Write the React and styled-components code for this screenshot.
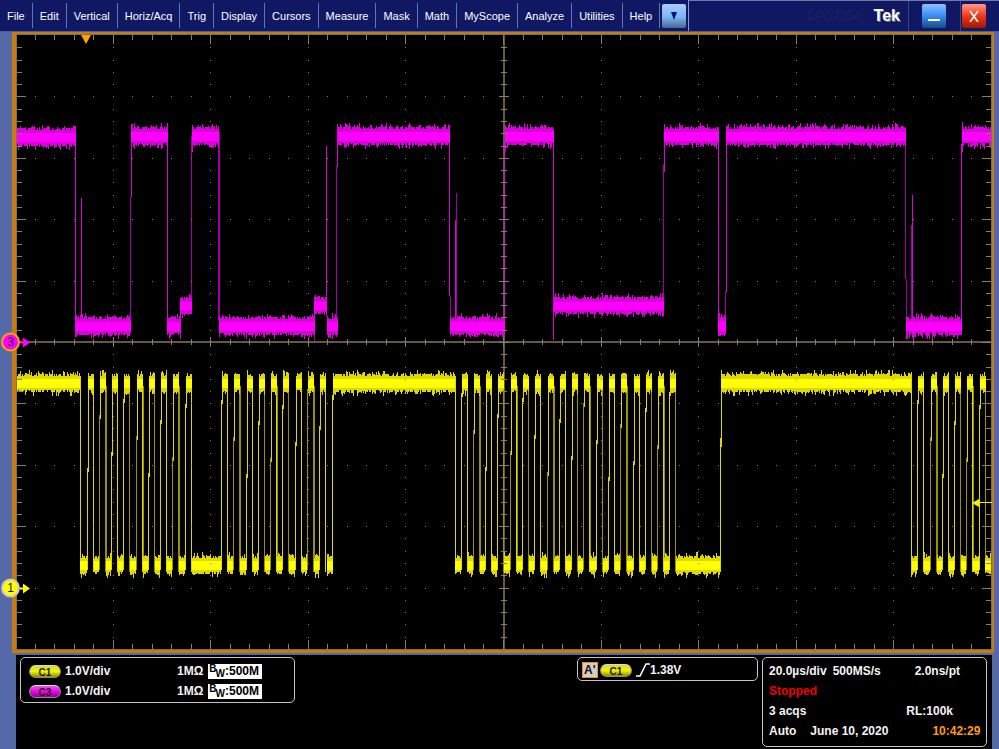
import React from 'react';
import styled, { createGlobalStyle } from 'styled-components';

const GlobalStyle = createGlobalStyle`
  * {
    box-sizing: border-box;
  }
  body {
    margin: 0;
    background-color: #5568a8;
    font-family: 'Liberation Sans', Arial, sans-serif;
  }
`;

const Page = styled.div`
  display: flex;
  flex-direction: column;
  height: 100vh;
  min-height: 480px;
`;

const MenuBar = styled.header`
  display: flex;
  flex: none;
  height: 32px;
  background-color: #101864;
  border-bottom: 1px solid #4a5ca4;
`;

const Menu = styled.nav`
  display: flex;
  align-items: center;
`;

const MenuItem = styled.button`
  height: 25px;
  padding: 0 7px;
  border: 0;
  border-right: 1px solid #5f78b4;
  background: none;
  color: #ffffff;
  font-family: inherit;
  font-size: 11px;
`;

const TitleArea = styled.div`
  display: flex;
  flex: 1;
  align-items: center;
  justify-content: flex-end;
  border-top: 1px solid #7079a8;
  border-left: 1px solid #8f98c0;
`;

const Model = styled.span`
  margin-right: 14px;
  color: #1b2159;
  font-size: 12px;
`;

const Brand = styled.span`
  margin-right: 8px;
  color: #ffffff;
  font-size: 16px;
  font-weight: 700;
  text-shadow: 1px 1px 0 #77756c;
`;

const WindowSlot = styled.div`
  display: flex;
  align-items: center;
  height: 100%;
  padding: 0 ${(p) => p.$right}px 0 ${(p) => p.$left}px;
  border-left: 1px solid #3d4684;
`;

const fills = {
  menu: 'linear-gradient(#a9cdfb, #7db4f4 55%, #46698f)',
  minimize: 'linear-gradient(#8fc0ff, #3a8bf5 50%, #184a88)',
  close: 'linear-gradient(#ff9a88, #f0371c 50%, #9e1800)',
};

const GlossButton = styled.button`
  display: flex;
  align-items: center;
  justify-content: center;
  width: 24px;
  height: 24px;
  margin: 0 ${(p) => (p.$kind === 'menu' ? 2 : 0)}px;
  padding: 0;
  border: 0;
  border-radius: 2px;
  background: ${(p) => fills[p.$kind]};
`;

const Screen = styled.main`
  position: relative;
  display: flex;
  flex: 1;
  min-height: 0;
  margin: 0 5px 2px 12px;
  border: solid #c27c10;
  border-width: 2px 2px 3px 4px;
  background-color: #000000;
`;

const Plot = styled.svg`
  display: block;
  flex: 1;
  min-width: 0;
  height: 100%;
`;

const Marker = styled.div`
  position: absolute;
  top: ${(p) => p.$top};
  left: -15px;
  display: flex;
  align-items: center;
  transform: translateY(-50%);
`;

const MarkerDot = styled.span`
  width: 19px;
  height: 19px;
  border: 2px solid ${(p) => p.$ring};
  border-radius: 50%;
  background-color: ${(p) => p.$color};
  color: #20102a;
  font-size: 12px;
  line-height: 15px;
  text-align: center;
`;

const StatusBar = styled.footer`
  display: flex;
  flex: none;
  align-items: flex-start;
  gap: 4px;
  height: 94px;
  margin: 0 7px 0 16px;
  padding: 2px 5px 2px 4px;
  background-color: #000000;
  color: #f4f4f4;
  font-size: 12px;
  font-weight: 700;
  line-height: 20px;
  white-space: pre;
`;

const Panel = styled.section`
  width: ${(p) => p.$width}px;
  height: ${(p) => p.$height};
  margin-left: ${(p) => (p.$push ? 'auto' : 0)};
  padding: ${(p) => p.$pad};
  border: 1px solid #c4c4c4;
  border-radius: 5px;
`;

const Row = styled.div`
  display: flex;
  align-items: center;
  height: 20px;
  justify-content: ${(p) => (p.$spread ? 'space-between' : 'flex-start')};
`;

const Badge = styled.span`
  width: 32px;
  height: 13px;
  margin-right: 4px;
  border: 1px solid #8d8d86;
  border-top-color: #d8d8d0;
  border-radius: 7px;
  background: linear-gradient(${(p) => p.$from}, ${(p) => p.$mid} 50%, ${(p) => p.$to});
  color: #241c10;
  font-size: 10px;
  line-height: 13px;
  text-align: center;
`;

const Scale = styled.span`
  width: 112px;
`;

const Bandwidth = styled.span`
  display: flex;
  width: 54px;
  height: 15px;
  margin-left: 5px;
  background-color: #ffffff;
  color: #000000;
  line-height: 14px;
`;

const Small = styled.span`
  margin-left: ${(p) => (p.$low ? -1 : 1)}px;
  padding-top: ${(p) => (p.$low ? 5 : 0)}px;
  font-size: 10px;
  line-height: 10px;
`;

const Source = styled.span`
  width: 16px;
  height: 16px;
  margin-right: 2px;
  padding-left: 1px;
  border: 1px solid #f08a10;
  background-color: #cfcfcf;
  color: #111111;
  line-height: 14px;
`;

const Field = styled.span`
  margin-right: ${(p) => p.$after || 0}px;
  color: ${(p) => p.$color || 'inherit'};
`;

const menus = [
  'File', 'Edit', 'Vertical', 'Horiz/Acq', 'Trig', 'Display', 'Cursors',
  'Measure', 'Mask', 'Math', 'MyScope', 'Analyze', 'Utilities', 'Help',
];

const LEFT = 16;
const RIGHT = 992;
const TOP = 35;
const BOTTOM = 649;
const MID_X = 504;
const MID_Y = 342;
const STEP_X = 19.52;
const STEP_Y = 12.28;

// Top and bottom of the solid part of each voltage level.
const levels = {
  c3High: [129, 143],
  c3Start: [130, 144],
  c3Mid: [299, 312],
  c3Low: [319, 333],
  c1High: [376, 390],
  c1Low: [558, 572],
};

// [start, end, level]
const c3Bands = [
  [16, 76, 'c3Start'], [76, 131, 'c3Low'], [131, 168, 'c3High'],
  [167, 180, 'c3Low'], [180, 192, 'c3Mid'], [192, 219, 'c3High'],
  [219, 315, 'c3Low'], [314, 327, 'c3Mid'], [327, 338, 'c3Low'],
  [338, 450, 'c3High'], [450, 505, 'c3Low'], [505, 554, 'c3High'],
  [554, 664, 'c3Mid'], [664, 719, 'c3High'], [718, 726, 'c3Low'],
  [726, 906, 'c3High'], [906, 962, 'c3Low'], [962, 992, 'c3High'],
];

// [x, top, bottom, bright]
const c3Edges = [
  [75, 130, 337, true], [81, 198, 320, true], [130, 197, 333], [131, 125, 197, true],
  [167, 130, 335, true], [180, 300, 339, true], [191, 136, 312], [192, 126, 152, true],
  [218, 132, 320], [219, 132, 338], [314, 300, 341], [326, 146, 316, true],
  [336, 166, 333], [337, 124, 167, true], [449, 125, 296, true], [450, 296, 337],
  [455, 220, 320, true], [456, 193, 320], [504, 142, 333, true], [505, 125, 152],
  [553, 132, 340, true], [663, 164, 312], [664, 130, 172, true], [718, 130, 336, true],
  [725, 291, 333], [726, 126, 292, true], [905, 130, 279], [906, 279, 338],
  [911, 225, 320], [912, 195, 320, true], [961, 144, 333, true], [962, 122, 152, true],
];

const PERIOD = 12.28;
const bursts = [
  { start: 80, first: 87.5, count: 9 },
  { start: 192, first: 222, count: 9 },
  { start: 455, first: 461.6, count: 18 },
  { start: 912, first: 918.3, count: 6 },
];

const c1Bands = [
  [16, 80, 'c1High'], [333, 455, 'c1High'], [721, 911, 'c1High'],
  [327, 333, 'c1Low'], [676, 720, 'c1Low'], [985, 992, 'c1Low'],
];
const c1Edges = [
  [80, 376, 572, true], [333, 384, 400, true], [332, 395, 572, true],
  [455, 376, 572, true], [720, 438, 572, true], [721, 382, 447, true],
  [911, 372, 577, true],
];

bursts.forEach(({ start, first, count }) => {
  let lowStart = start;
  for (let i = 0; i < count; i += 1) {
    const rise = Math.round(first + i * PERIOD);
    const fall = Math.round(first + i * PERIOD + 6);
    const joint = 388 + ((i * 37 + start) % 90);
    c1Bands.push([lowStart, rise - 1, 'c1Low'], [rise, fall, 'c1High']);
    c1Edges.push([rise - 1, joint, 570, i % 3 !== 1], [rise, 384, joint + 4, true]);
    c1Edges.push([fall - 1, 380, 572, i % 2 === 0]);
    if (i % 3 === 1) {
      c1Edges.push([fall, 386, 572, false]);
    }
    lowStart = fall;
  }
});

const makeNoise = (seed) => {
  let state = seed;
  return () => {
    state = (state * 1664525 + 1013904223) % 4294967296;
    return state / 4294967296;
  };
};

const fringe = (bands, seed, reach) => {
  const noise = makeNoise(seed);
  let d = '';
  bands.forEach(([from, to, level]) => {
    const [top, bottom] = levels[level];
    for (let x = from; x < to; x += 1) {
      const up = Math.floor(noise() ** 3 * reach) + (noise() > 0.4 ? 2 : 0);
      const down = Math.floor(noise() ** 3 * reach) + (noise() > 0.4 ? 2 : 0);
      d += `M${x} ${top - up}h1V${bottom + down}h-1z`;
    }
  });
  return d;
};

const Trace = ({ bands, edges, seed, bright, mid, dim }) => (
  <g shapeRendering="crispEdges">
    {edges.map(([x, y1, y2, strong], i) => (
      <rect key={i} x={x} y={y1} width="1" height={y2 - y1} fill={strong ? mid : dim} />
    ))}
    <path d={fringe(bands, seed, 5)} fill={mid} />
    {bands.map(([from, to, level], i) => {
      const [top, bottom] = levels[level];
      return (
        <rect key={i} x={from} y={top + 3} width={to - from} height={bottom - top - 5} fill={bright} />
      );
    })}
  </g>
);

const graticule = () => {
  let ticks = '';
  let dots = '';
  for (let i = -25; i <= 25; i += 1) {
    const x = Math.round(MID_X + i * STEP_X) - 1;
    const major = i % 5 === 0;
    if (Math.abs(i) < 25) {
      const edge = major ? 9 : 5;
      const half = major ? 5 : 3;
      ticks += `M${x} ${TOP}h1v${edge}h-1zM${x} ${BOTTOM}h1v-${edge}h-1z`;
      ticks += `M${x} ${MID_Y - half}h1v${half * 2}h-1z`;
      for (let j = -20; j <= 20; j += 5) {
        dots += `M${x} ${Math.round(MID_Y + j * STEP_Y)}h1v1h-1z`;
      }
    }
  }
  for (let j = -24; j <= 24; j += 1) {
    const y = Math.round(MID_Y + j * STEP_Y);
    const major = j % 5 === 0;
    const edge = major ? 10 : 6;
    const half = major ? 5 : 3;
    ticks += `M${LEFT} ${y}h${edge}v1h-${edge}zM${RIGHT} ${y}h-${edge}v1h${edge}z`;
    ticks += `M${MID_X - half} ${y}h${half * 2}v1h-${half * 2}z`;
    for (let i = -20; i <= 20; i += 5) {
      dots += `M${Math.round(MID_X + i * STEP_X) - 1} ${y}h1v1h-1z`;
    }
  }
  return { ticks, dots };
};

// The centre axes go under the traces, the ticks and dots over them.
const Axes = () => (
  <g shapeRendering="crispEdges" fill="#625844">
    <rect x={LEFT} y={MID_Y - 1} width={RIGHT - LEFT} height="2" />
    <rect x={MID_X - 1} y={TOP} width="2" height={BOTTOM - TOP} />
  </g>
);

const Graticule = () => {
  const { ticks, dots } = graticule();
  return (
    <g shapeRendering="crispEdges">
      <path d={dots} fill="#8a8164" />
      <path d={ticks} fill="#8b7e60" />
      <path d="M16 34h976v616h-976zM17 35v614h974v-614z" fillRule="evenodd" fill="#7d6f55" />
    </g>
  );
};

const ChannelMarker = ({ label, top, color, ring }) => (
  <Marker $top={top}>
    <MarkerDot $color={color} $ring={ring}>{label}</MarkerDot>
    <svg width="10" height="10" viewBox="0 0 10 10" aria-hidden="true">
      <path d="M0 4h3V0l7 5-7 5V6H0z" fill={color} />
    </svg>
  </Marker>
);

const yellowBadge = { $from: '#d8d840', $mid: '#f4f400', $to: '#8c8c00' };
const magentaBadge = { $from: '#d860d8', $mid: '#f000f0', $to: '#900090' };

const Channel = ({ name, badge }) => (
  <Row>
    <Badge {...badge}>{name}</Badge>
    <Scale>1.0V/div</Scale>
    <span>1MΩ</span>
    <Bandwidth>
      <Small>B</Small>
      <Small $low>W</Small>
      :500M
    </Bandwidth>
  </Row>
);

const App = () => {
  return (
    <>
      <GlobalStyle />
      <Page>
        <MenuBar>
          <Menu>
            {menus.map((item) => (
              <MenuItem key={item} type="button">{item}</MenuItem>
            ))}
            <GlossButton type="button" $kind="menu" aria-label="More menus">
              <svg width="6" height="8" viewBox="0 0 6 8">
                <path d="M0 0h6L3 8z" fill="#08107c" />
              </svg>
            </GlossButton>
          </Menu>
          <TitleArea>
            <Model>DPO7254</Model>
            <Brand>Tek</Brand>
            <WindowSlot $left={13} $right={14}>
              <GlossButton type="button" $kind="minimize" aria-label="Minimize">
                <svg width="12" height="14" viewBox="0 0 12 14">
                  <path d="M0 10h12v2H0z" fill="#ffffff" />
                </svg>
              </GlossButton>
            </WindowSlot>
            <WindowSlot $left={1} $right={13}>
              <GlossButton type="button" $kind="close" aria-label="Close">
                <svg width="10" height="12" viewBox="0 0 10 12">
                  <path d="M1 1l8 11M9 1L1 12" stroke="#ffffff" strokeWidth="1.6" />
                </svg>
              </GlossButton>
            </WindowSlot>
          </TitleArea>
        </MenuBar>
        <Screen>
          <Plot viewBox="16 34 976 616" preserveAspectRatio="none" role="img" aria-label="Waveforms C1 and C3">
            <Axes />
            <Trace bands={c3Bands} edges={c3Edges} seed={7} bright="#ff00ff" mid="#dc00dc" dim="#a000a0" />
            <Trace bands={c1Bands} edges={c1Edges} seed={21} bright="#ffff00" mid="#dcd800" dim="#989200" />
            <Graticule />
            <path d="M81 35h10l-5 9z" fill="#ffa200" />
            <path d="M972 503l7-4v3h13v1h-13v4z" fill="#f4f000" />
          </Plot>
          <ChannelMarker label="3" top="50%" color="#ff00ff" ring="#ffa000" />
          <ChannelMarker label="1" top="90%" color="#ffff00" ring="#c8c8c8" />
        </Screen>
        <StatusBar>
          <Panel $width={275} $height="46px" $pad="3px 8px">
            <Channel name="C1" badge={yellowBadge} />
            <Channel name="C3" badge={magentaBadge} />
          </Panel>
          <Panel $width={181} $height="24px" $pad="2px 4px" $push>
            <Row>
              <Source>A'</Source>
              <Badge {...yellowBadge}>C1</Badge>
              <svg width="14" height="14" viewBox="0 0 14 14" aria-hidden="true">
                <path d="M0 13h4l6-12h4" fill="none" stroke="#ffffff" strokeWidth="1.6" />
              </svg>
              <Field>1.38V</Field>
            </Row>
          </Panel>
          <Panel $width={225} $height="90px" $pad="3px 6px">
            <Row>
              <Field $after={6}>20.0µs/div</Field>
              <Field $after={34}>500MS/s</Field>
              <Field>2.0ns/pt</Field>
            </Row>
            <Row>
              <Field $color="#f00000">Stopped</Field>
            </Row>
            <Row $spread>
              <Field>3 acqs</Field>
              <Field $after={27}>RL:100k</Field>
            </Row>
            <Row>
              <Field $after={14}>Auto</Field>
              <Field $after={44}>June 10, 2020</Field>
              <Field $color="#ff9a10">10:42:29</Field>
            </Row>
          </Panel>
        </StatusBar>
      </Page>
    </>
  );
};

export default App;
